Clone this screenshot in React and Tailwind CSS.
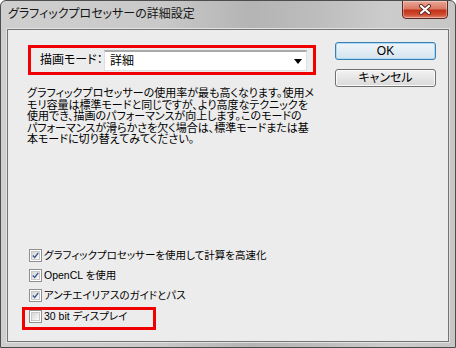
const JP = '"Liberation Sans", "Noto Sans CJK JP", sans-serif';

const CHECKS = [
  { label: 'グラフィックプロセッサーを使用して計算を高速化', checked: true },
  { label: 'OpenCL を使用', checked: true },
  { label: 'アンチエイリアスのガイドとパス', checked: true },
];

function CheckBox({ checked }) {
  return (
    <div className="w-[13px] h-[13px] shrink-0 border border-[#8e8f8f] bg-white p-[1px]">
      <div className="w-full h-full border border-[#c8c8c8] bg-gradient-to-br from-[#d6d6d6] to-[#fbfbfb] flex items-center justify-center">
        {checked && (
          <svg width="9" height="9" viewBox="0 0 9 9">
            <path d="M1 4.5 L3.5 7 L8 1.2" fill="none" stroke="#3f578e" strokeWidth="1.8" />
          </svg>
        )}
      </div>
    </div>
  );
}

export default function App() {
  return (
    <div
      className="w-[456px] h-[348px] flex flex-col border border-[#4d4d4d] rounded-t-[6px] overflow-hidden bg-[linear-gradient(90deg,#cfcfcf_0%,#c9c9c9_35%,#b4b4b4_55%,#bdbdbd_70%,#cccccc_85%,#c6c6c6_100%)] text-black [font-feature-settings:'palt']"
      style={{ fontFamily: JP }}
    >
      {/* title bar */}
      <div className="h-[28px] shrink-0 flex items-start justify-between pl-[7px] pr-[7px]">
        <div className="pt-[5px] text-[12px] leading-[16px] text-[#151515]">グラフィックプロセッサーの詳細設定</div>
        <div className="w-[46px] h-[19px] -mt-[1px] rounded-b-[4px] border border-[#5c2a22] bg-[linear-gradient(180deg,#e9a896_0%,#d97a64_45%,#c2331a_55%,#cf4a2e_80%,#e0866e_100%)] flex items-center justify-center shadow-[inset_0_0_0_1px_rgba(255,255,255,0.35)]">
          <svg width="14" height="11" viewBox="0 0 14 11">
            <path d="M3 2 L11 9 M11 2 L3 9" stroke="#5a2a20" strokeWidth="4" strokeLinecap="round" />
            <path d="M3 2 L11 9 M11 2 L3 9" stroke="#ffffff" strokeWidth="2.2" strokeLinecap="round" />
          </svg>
        </div>
      </div>

      {/* client area */}
      <div className="flex-1 ml-[6px] mr-[6px] mb-[5px] border border-[#747474] bg-[#ececec] flex shadow-[0_0_0_1px_#e2e2e2]">
        <div className="w-[327px] flex flex-col">
          <div className="ml-[20px] mt-[15px] w-[288px] h-[30px] border-[3px] border-[#f00000] flex items-center">
            <span className="pl-[9px] w-[73px] text-[12px] leading-[14px]">描画モード：</span>
            <div className="w-[203px] h-[21px] mt-[1px] bg-white border border-[#e0e0e0] border-t-2 border-t-[#a9a9a9] flex items-center justify-between pl-[5px] pr-[4px]">
              <span className="text-[12px] leading-[14px]">詳細</span>
              <svg width="8" height="5" viewBox="0 0 8 5">
                <path d="M0 0 L8 0 L4 5 Z" fill="#000" />
              </svg>
            </div>
          </div>

          <div className="ml-[19px] mt-[13px] text-[11px] leading-[11.5px] whitespace-nowrap">
            グラフィックプロセッサーの使用率が最も高くなります。使用メ<br />
            モリ容量は標準モードと同じですが、より高度なテクニックを<br />
            使用でき、描画のパフォーマンスが向上します。このモードの<br />
            パフォーマンスが滑らかさを欠く場合は、標準モードまたは基<br />
            本モードに切り替えてみてください。
          </div>

          <div className="mt-auto mb-[11px] ml-[14px] flex flex-col">
            {CHECKS.map(c => (
              <div key={c.label} className="h-[20px] pl-[7px] flex items-center gap-[2px]">
                <CheckBox checked={c.checked} />
                <span className="text-[10.5px] leading-[14px] whitespace-nowrap">{c.label}</span>
              </div>
            ))}
            <div className="mt-[2px] w-[134px] h-[23px] border-[3px] border-[#f00000] pl-[4px] flex items-start gap-[2px]">
              <CheckBox checked={false} />
              <span className="text-[10.5px] leading-[13px] whitespace-nowrap">30 bit ディスプレイ</span>
            </div>
          </div>
        </div>

        <div className="pt-[12px] flex flex-col gap-[9px]">
          <button className="w-[101px] h-[18px] rounded-[3px] border border-[#3c7fb1] bg-gradient-to-b from-[#eef5fa] to-[#d6e4ee] shadow-[inset_0_0_0_1px_#a9dbf6] text-[12px] leading-[14px]">
            OK
          </button>
          <button className="w-[101px] h-[18px] rounded-[3px] border border-[#707070] bg-gradient-to-b from-[#f3f3f3] to-[#d9d9d9] shadow-[inset_0_0_0_1px_#fbfbfb] text-[12px] leading-[14px]">
            キャンセル
          </button>
        </div>
      </div>
    </div>
  );
}
